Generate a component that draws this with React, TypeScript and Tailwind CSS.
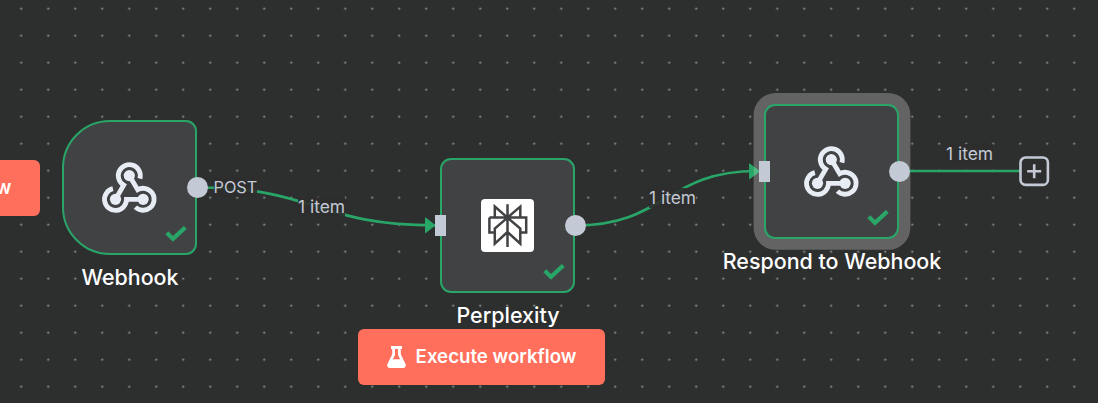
import React from 'react';

function WebhookIcon() {
  return (
    <svg viewBox="0.7 0.3 54 52" className="h-[52px] w-[54px] overflow-visible" fill="none" stroke="#e8ecf5" strokeWidth="4.8">
      <circle cx="27" cy="13.9" r="5.6" fill="#e8ecf5" stroke="none" />
      <circle cx="13.2" cy="37.6" r="5.6" fill="#e8ecf5" stroke="none" />
      <circle cx="40.8" cy="37.6" r="5.6" fill="#e8ecf5" stroke="none" />
      <path d="M37.6 16.9A11 11 0 1 0 21.4 23.4L13.2 37.6" />
      <path d="M27 13.9L35.4 28A11 11 0 1 1 33.1 45.4" />
      <path d="M10.6 27A11 11 0 1 0 24.2 37.6H40.8" />
    </svg>
  );
}

function PerplexityIcon() {
  return (
    <svg viewBox="0 0 53 53" className="h-[53px] w-[53px] rounded-[4px] bg-white" fill="none" stroke="#414244" strokeWidth="2.5">
      <path d="M26.5 5.3V48M13.8 18.6V7.6L26.5 18.6L39.3 7.6V18.6M8.4 18.6H45.2V33.6H39.3M13.8 33.6H8.4V18.6M26.5 18.6L13.8 29.6V44.6L26.5 33L39.3 44.6V29.6L26.5 18.6" />
      <circle cx="26.5" cy="18.6" r="2.6" fill="#414244" stroke="none" />
    </svg>
  );
}

function FlaskIcon() {
  return (
    <svg viewBox="0 0 19 22" className="h-[22px] w-[19px] shrink-0">
      <path d="M4 0H15V3H13.8V8.2L18.5 18C19.4 20.2 18.2 22 16.2 22H2.8C.8 22-.4 20.2.5 18L5.2 8.2V3H4ZM8 3V9L5.9 13.3H13.1L11 9V3Z" fill="white" fillRule="evenodd" />
    </svg>
  );
}

interface NodeProps {
  name: string;
  place: string;
  shape: string;
  hasInput?: boolean;
  children: React.ReactNode;
}

function WorkflowNode({ name, place, shape, hasInput, children }: NodeProps) {
  return (
    <figure className={`absolute flex w-[135px] flex-col items-center gap-[9px] ${place}`}>
      <div className={`grid h-[135px] w-full grid-cols-[131px] grid-rows-[131px] border-2 border-[#29a568] bg-[#414244] ${shape}`}>
        <div className="col-start-1 row-start-1 place-self-center">{children}</div>
        <svg
          viewBox="0 0 22 16"
          className="col-start-1 row-start-1 mr-[8px] mb-[11px] h-[16px] w-[22px] self-end justify-self-end"
          fill="none"
          stroke="#29a568"
          strokeWidth="4.2"
        >
          <path d="M1.8 6.7L8 12.9L20.3 1.4" />
        </svg>
        <div className="z-10 col-start-1 row-start-1 -mr-[13px] -ml-[7px] flex items-center justify-between">
          <span className={hasInput ? 'h-[21px] w-[11px] bg-[#c3c9d5]' : 'w-[11px]'} />
          <span className="size-[21px] rounded-full bg-[#c3c9d5]" />
        </div>
      </div>
      <figcaption className="pl-px text-[21.45px] leading-[26px] font-medium whitespace-nowrap text-white">{name}</figcaption>
    </figure>
  );
}

function ExecuteButton({ place }: { place: string }) {
  return (
    <button
      className={`absolute flex h-[56px] w-[247px] items-center justify-center gap-[10px] rounded-[6px] bg-[#ff6f5c] text-[18.65px] font-semibold whitespace-nowrap text-white ${place}`}
    >
      <FlaskIcon />
      <span>Execute workflow</span>
    </button>
  );
}

function EdgeLabel({ place, children }: { place: string; children: React.ReactNode }) {
  return (
    <span className={`absolute bg-[#2d2e2e]/90 leading-[20px] whitespace-nowrap text-[#c3c9d5] ${place}`}>{children}</span>
  );
}

export default function App() {
  return (
    <main className="relative h-[403px] w-[1098px] overflow-hidden bg-[#2d2e2e] font-[Inter,sans-serif]">
      <svg className="absolute inset-0 h-full w-full" viewBox="0 0 1098 403" fill="none">
        <defs>
          <pattern id="dots" x="7.7" y="-4.8" width="27" height="27" patternUnits="userSpaceOnUse">
            <circle cx="13.5" cy="13.5" r="1" fill="#9c9d9d" />
          </pattern>
        </defs>
        <rect width="1098" height="403" fill="url(#dots)" />
        <rect x="753.6" y="93" width="156.8" height="156.8" rx="22" fill="#636363" />
        <g stroke="#29a568" strokeWidth="2.7">
          <path d="M197 187.5C316 187.5 316 225.3 435 225.3" />
          <path d="M575 225.5C666 225.5 666 171 757 171" />
          <path d="M899 171H1020" />
        </g>
        <path d="M425.5 217.8L435 225.3L425.5 232.8ZM749.6 163.8L759 171.3L749.6 178.8Z" fill="#29a568" stroke="#29a568" strokeLinejoin="round" />
        <path d="M753.8 166.5L760 171.3L753.8 176.3Z" fill="#55b784" />
      </svg>

      <EdgeLabel place="left-[213.5px] top-[177px] text-[16.3px]">POST</EdgeLabel>
      <EdgeLabel place="left-[298px] top-[197px] text-[17.4px]">1 item</EdgeLabel>
      <EdgeLabel place="left-[649px] top-[188px] text-[17.4px]">1 item</EdgeLabel>
      <EdgeLabel place="left-[946px] top-[144px] text-[17.4px]">1 item</EdgeLabel>

      <WorkflowNode name="Webhook" place="left-[62px] top-[120px]" shape="rounded-l-[48px] rounded-r-[11px]">
        <WebhookIcon />
      </WorkflowNode>
      <WorkflowNode name="Perplexity" place="left-[440px] top-[158px]" shape="rounded-[11px]" hasInput>
        <PerplexityIcon />
      </WorkflowNode>
      <WorkflowNode name="Respond to Webhook" place="left-[764px] top-[104px]" shape="rounded-[11px]" hasInput>
        <WebhookIcon />
      </WorkflowNode>

      <svg className="absolute left-[1019px] top-[156px] h-[31px] w-[31px]" viewBox="0 0 31 31" fill="none" stroke="#c3c9d5" strokeWidth="2.6">
        <rect x="1.5" y="1.5" width="27.4" height="27.4" rx="5" fill="#2d2e2e" />
        <path d="M15.2 8.2V22.2M8.2 15.2H22.2" />
      </svg>

      <ExecuteButton place="-left-[207px] top-[160px]" />
      <ExecuteButton place="left-[358px] top-[329px]" />
    </main>
  );
}
